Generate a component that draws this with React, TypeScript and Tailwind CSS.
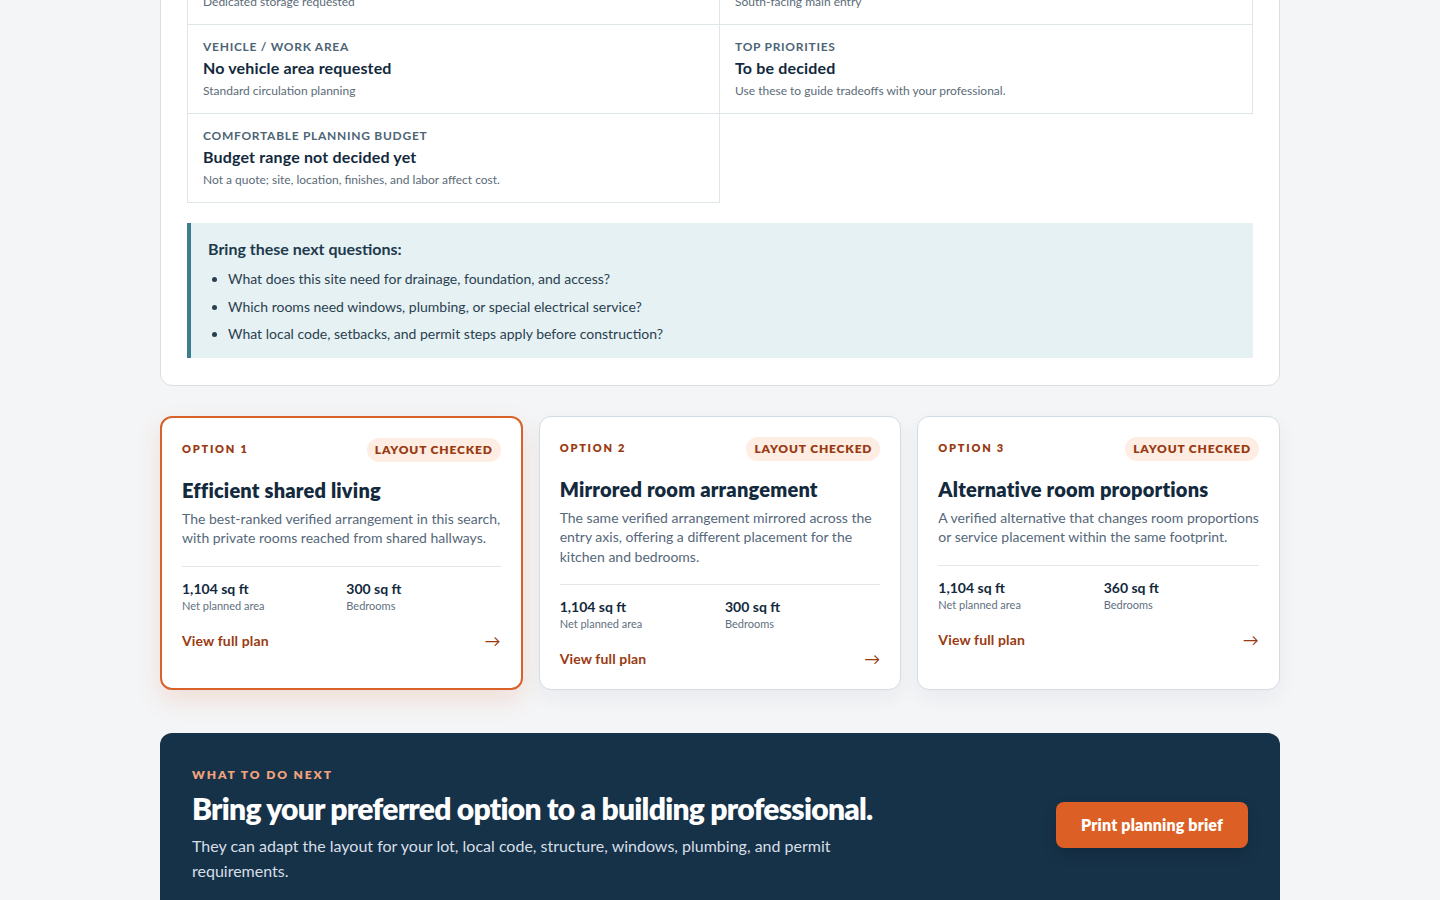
import React from 'react';

interface Fact {
  label: string;
  value: string;
  note: string;
}

interface PlanOption {
  id: number;
  title: string;
  summary: string;
  area: string;
  bedrooms: string;
}

const facts: Fact[] = [
  { label: 'Storage', value: 'Storage room included', note: 'Dedicated storage requested' },
  { label: 'Entry orientation', value: 'South', note: 'South-facing main entry' },
  { label: 'Vehicle / work area', value: 'No vehicle area requested', note: 'Standard circulation planning' },
  { label: 'Top priorities', value: 'To be decided', note: 'Use these to guide tradeoffs with your professional.' },
  {
    label: 'Comfortable planning budget',
    value: 'Budget range not decided yet',
    note: 'Not a quote; site, location, finishes, and labor affect cost.',
  },
];

const questions = [
  'What does this site need for drainage, foundation, and access?',
  'Which rooms need windows, plumbing, or special electrical service?',
  'What local code, setbacks, and permit steps apply before construction?',
];

const options: PlanOption[] = [
  {
    id: 1,
    title: 'Efficient shared living',
    summary: 'The best-ranked verified arrangement in this search, with private rooms reached from shared hallways.',
    area: '1,104 sq ft',
    bedrooms: '300 sq ft',
  },
  {
    id: 2,
    title: 'Mirrored room arrangement',
    summary:
      'The same verified arrangement mirrored across the entry axis, offering a different placement for the kitchen and bedrooms.',
    area: '1,104 sq ft',
    bedrooms: '300 sq ft',
  },
  {
    id: 3,
    title: 'Alternative room proportions',
    summary: 'A verified alternative that changes room proportions or service placement within the same footprint.',
    area: '1,104 sq ft',
    bedrooms: '360 sq ft',
  },
];

const FactCell: React.FC<{ fact: Fact; index: number }> = ({ fact, index }) => (
  <div
    className={`border-b border-r border-[#dfe6ea] px-[15px] pt-[14px] pb-[13px] ${
      index % 2 === 0 ? 'border-l' : ''
    } ${index < 2 ? 'border-t' : ''}`}
  >
    <p className="text-[12px] leading-4 font-bold uppercase tracking-[0.06em] text-[#4d6475]">{fact.label}</p>
    <p className="mt-px text-[16px] leading-6 font-bold tracking-[0.01em] text-[#13293d]">{fact.value}</p>
    <p className="mt-[2px] text-[12px] leading-[18px] text-[#5b6b78]">{fact.note}</p>
  </div>
);

const OptionCard: React.FC<{ option: PlanOption; selected: boolean }> = ({ option, selected }) => (
  <article
    className={`rounded-xl bg-white p-5 ${
      selected
        ? 'border-2 border-[#d9622b] shadow-[0_10px_24px_rgba(217,98,43,0.16)]'
        : 'border border-[#d3dce2] shadow-[0_8px_20px_rgba(19,41,61,0.05)]'
    }`}
  >
    <div className="flex items-center justify-between">
      <span className="text-[11px] font-extrabold uppercase tracking-[0.16em] text-[#9a3a12]">Option {option.id}</span>
      <span className="rounded-full bg-[#fdede3] px-2 py-[3px] text-[12px] leading-[18px] font-extrabold uppercase tracking-[0.07em] text-[#9a3a12]">
        Layout checked
      </span>
    </div>
    <h3 className="mt-[14px] text-[20px] leading-7 font-extrabold tracking-[0.01em] text-[#13293d]">{option.title}</h3>
    <p className="mt-[5px] text-[14px] leading-[19.5px] text-[#56687a]">{option.summary}</p>
    <div className="mt-[18px] grid grid-cols-2 gap-x-2.5 border-t border-[#e1e7eb] pt-3">
      <div>
        <p className="text-[14px] leading-5 font-bold text-[#13293d]">{option.area}</p>
        <p className="text-[11px] leading-[14px] text-[#5f7080]">Net planned area</p>
      </div>
      <div>
        <p className="text-[14px] leading-5 font-bold text-[#13293d]">{option.bedrooms}</p>
        <p className="text-[11px] leading-[14px] text-[#5f7080]">Bedrooms</p>
      </div>
    </div>
    <a
      href="#"
      className="mt-[18px] flex items-center justify-between text-[14px] leading-5 font-bold tracking-[0.01em] text-[#9a3a12]"
    >
      View full plan
      <span className="text-[16px] font-normal">→</span>
    </a>
  </article>
);

export default function App() {
  return (
    <div
      className="h-[900px] overflow-hidden bg-[#f4f5f7]"
      style={{ fontFamily: 'Lato, "Noto Sans", sans-serif' }}
    >
      <main className="mx-auto -mt-[92px] w-[1120px]">
        {/* Brief summary card */}
        <section className="rounded-xl border border-[#d7dfe4] bg-white px-[26px] pt-[26px] pb-[27px]">
          <div className="grid grid-cols-2">
            {facts.map((fact, i) => (
              <FactCell key={fact.label} fact={fact} index={i} />
            ))}
          </div>

          <div className="mt-5 border-l-4 border-[#3b7f8c] bg-[#e6f1f3] pl-[17px] pr-5 pt-[14px] pb-[10px]">
            <h4 className="text-[16px] leading-6 font-bold text-[#1d3a4d]">Bring these next questions:</h4>
            <ul className="mt-[4px] list-disc pl-5 text-[14px] leading-[27.5px] text-[#2a3f50]">
              {questions.map(q => (
                <li key={q}>{q}</li>
              ))}
            </ul>
          </div>
        </section>

        {/* Plan options */}
        <div className="mt-[30px] grid grid-cols-3 gap-4">
          {options.map(option => (
            <OptionCard key={option.id} option={option} selected={option.id === 1} />
          ))}
        </div>

        {/* Next steps */}
        <section className="mt-[43px] flex items-start justify-between rounded-t-xl bg-[#163249] px-8 pt-[34px] pb-10">
          <div>
            <p className="text-[12px] leading-4 font-extrabold uppercase tracking-[0.16em] text-[#f2a27c]">What to do next</p>
            <h2 className="mt-[7px] text-[30px] leading-9 font-extrabold tracking-[-0.025em] text-white">
              Bring your preferred option to a building professional.
            </h2>
            <p className="mt-[7px] max-w-[640px] text-[16px] leading-[25px] text-[#d6dfe7]">
              They can adapt the layout for your lot, local code, structure, windows, plumbing, and permit requirements.
            </p>
          </div>
          <button className="mt-[35px] rounded-lg bg-[#dc5f25] px-[25px] py-[11px] text-[16px] leading-6 font-extrabold tracking-[0.01em] text-white shadow-[0_6px_14px_rgba(0,0,0,0.18)]">
            Print planning brief
          </button>
        </section>
      </main>
    </div>
  );
}
